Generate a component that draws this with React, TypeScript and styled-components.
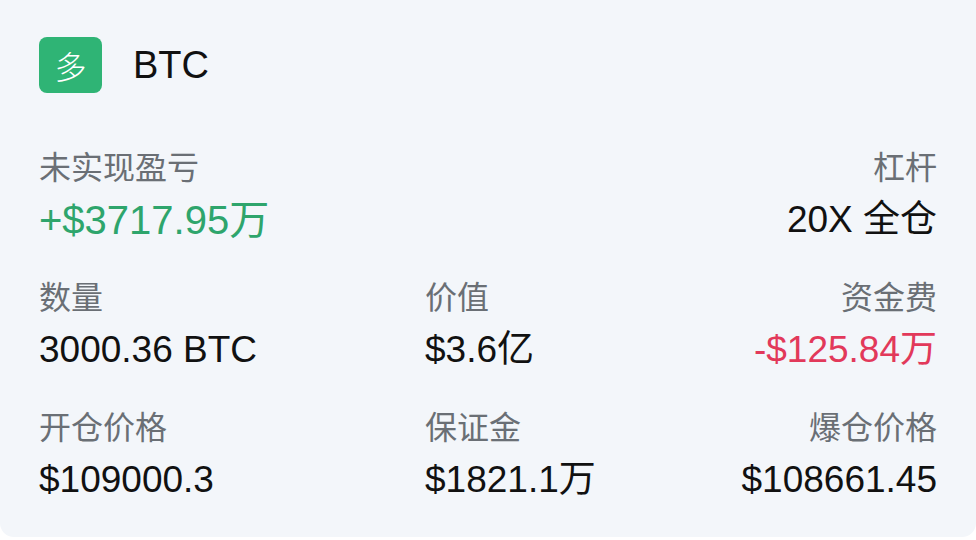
import styled, { createGlobalStyle } from "styled-components";

const GlobalStyle = createGlobalStyle`
  html, body {
    margin: 0;
    padding: 0;
    background: #ffffff;
  }
  body {
    font-family: "Liberation Sans", "Noto Sans CJK SC", sans-serif;
  }
`;

interface Field {
  label: string;
  value: string;
  tone?: "up" | "down";
  col: number;
}

const fields: Field[] = [
  { label: "未实现盈亏", value: "+$3717.95万", tone: "up", col: 1 },
  { label: "杠杆", value: "20X 全仓", col: 3 },
  { label: "数量", value: "3000.36 BTC", col: 1 },
  { label: "价值", value: "$3.6亿", col: 2 },
  { label: "资金费", value: "-$125.84万", tone: "down", col: 3 },
  { label: "开仓价格", value: "$109000.3", col: 1 },
  { label: "保证金", value: "$1821.1万", col: 2 },
  { label: "爆仓价格", value: "$108661.45", col: 3 },
];

const App = () => {
  return (
    <>
      <GlobalStyle />
      <Card>
        <Header>
          <SideBadge>多</SideBadge>
          <Symbol>BTC</Symbol>
        </Header>
        <Grid>
          {fields.map((item, index) => (
            <Cell key={index} col={item.col}>
              <Label>{item.label}</Label>
              <Value tone={item.tone}>{item.value}</Value>
            </Cell>
          ))}
        </Grid>
      </Card>
    </>
  );
};

export default App;

const Card = styled.div`
  box-sizing: border-box;
  width: 976px;
  height: 537px;
  padding: 37px 39px 0 39px;
  background: #f3f6fa;
  border-radius: 0 0 14px 14px;
`;

const Header = styled.div`
  display: flex;
  align-items: center;
  gap: 31px;
  height: 56px;
  margin-bottom: 55px;
`;

const SideBadge = styled.div`
  display: flex;
  align-items: center;
  justify-content: center;
  width: 63px;
  height: 56px;
  border-radius: 8px;
  background: #2fb475;
  color: #ffffff;
  font-size: 32px;
  font-weight: 300;
  font-family: "Noto Sans CJK SC", sans-serif;
`;

const Symbol = styled.div`
  font-size: 38px;
  line-height: 44px;
  color: #111111;
`;

const Grid = styled.div`
  display: grid;
  grid-template-columns: 386px 1fr 1fr;
  row-gap: 36px;
`;

const Cell = styled.div<{ col: number }>`
  grid-column: ${(props) => props.col};
  display: flex;
  flex-direction: column;
  gap: 10px;
  align-items: ${(props) => (props.col === 3 ? "flex-end" : "flex-start")};
`;

const Label = styled.div`
  font-size: 32px;
  line-height: 40px;
  color: #6a6f75;
`;

const Value = styled.div<{ tone?: "up" | "down" }>`
  font-size: ${(props) => (props.tone === "up" ? "40px" : "37px")};
  line-height: 44px;
  white-space: nowrap;
  color: ${(props) =>
    props.tone === "up" ? "#2ea56c" : props.tone === "down" ? "#e2395a" : "#111111"};
`;
